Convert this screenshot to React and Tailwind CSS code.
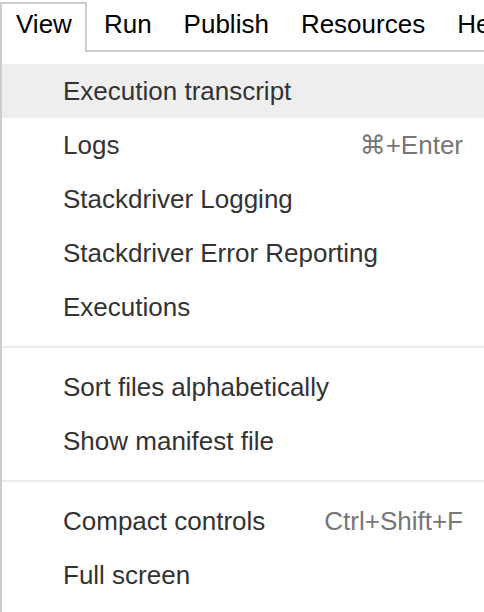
const menuBar = ["Run", "Publish", "Resources", "Help"];

const groups = [
  [
    { label: "Execution transcript", active: true },
    { label: "Logs", shortcut: "⌘+Enter" },
    { label: "Stackdriver Logging" },
    { label: "Stackdriver Error Reporting" },
    { label: "Executions" },
  ],
  [{ label: "Sort files alphabetically" }, { label: "Show manifest file" }],
  [{ label: "Compact controls", shortcut: "Ctrl+Shift+F" }, { label: "Full screen" }],
];

function MenuItem({ item }) {
  return (
    <div
      className={`flex h-[54px] items-center justify-between pl-[61px] pr-[21px] text-[26px] leading-[30px] whitespace-nowrap ${
        item.active ? "bg-[#eeeeee]" : ""
      }`}
    >
      <span className="text-[#333333]">{item.label}</span>
      {item.shortcut ? <span className="text-[#777777]">{item.shortcut}</span> : null}
    </div>
  );
}

export default function App() {
  return (
    <div
      className="flex h-[612px] w-[484px] flex-col overflow-hidden bg-white"
      style={{ fontFamily: '"Liberation Sans", Arial, "DejaVu Sans", sans-serif' }}
    >
      <div className="flex items-end">
        <div className="mt-[2px] border-2 border-b-0 border-[#cccccc] bg-white pt-[5px] pb-[13px] pl-[14px] pr-[13px] text-[26px] leading-[30px] text-black">
          View
        </div>
        <div className="flex min-w-0 flex-1 overflow-hidden border-b-2 border-[#cccccc] pl-px pt-[9px] pb-[11px] text-[26px] leading-[30px] text-black whitespace-nowrap">
          {menuBar.map((name) => (
            <span key={name} className="px-4">
              {name}
            </span>
          ))}
        </div>
      </div>

      <div className="flex-1 border-l-2 border-[#cccccc] pt-3">
        {groups.map((group, i) => (
          <div key={i}>
            {i > 0 ? <div className="my-3 h-[2px] bg-[#ebebeb]" /> : null}
            {group.map((item) => (
              <MenuItem key={item.label} item={item} />
            ))}
          </div>
        ))}
      </div>
    </div>
  );
}
